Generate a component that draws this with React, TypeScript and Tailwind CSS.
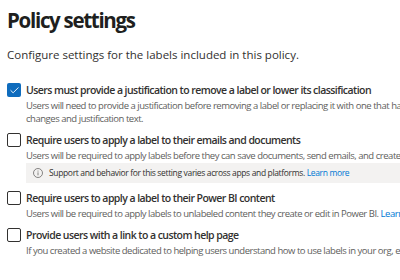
import { Check } from "lucide-react";

type Setting = {
  title: string;
  lines: string[];
  checked?: boolean;
  link?: boolean;
  note?: boolean;
};

const settings: Setting[] = [
  {
    title: "Users must provide a justification to remove a label or lower its classification",
    lines: [
      "Users will need to provide a justification before removing a label or replacing it with one that has a lower-order number. You can use activity explorer to review label",
      "changes and justification text.",
    ],
    checked: true,
  },
  {
    title: "Require users to apply a label to their emails and documents",
    lines: [
      "Users will be required to apply labels before they can save documents, send emails, and create or edit Power BI content.",
    ],
    note: true,
  },
  {
    title: "Require users to apply a label to their Power BI content",
    lines: ["Users will be required to apply labels to unlabeled content they create or edit in Power BI."],
    link: true,
  },
  {
    title: "Provide users with a link to a custom help page",
    lines: [
      "If you created a website dedicated to helping users understand how to use labels in your org, enter its URL here.",
    ],
  },
];

function Checkbox({ checked }: { checked?: boolean }) {
  if (checked) {
    return (
      <div className="mt-[1px] flex h-[14px] w-[14px] shrink-0 items-center justify-center rounded-[2px] bg-[#0f6cbd]">
        <Check className="h-[11px] w-[11px] text-white" strokeWidth={2} />
      </div>
    );
  }
  return <div className="mt-[1px] h-[14px] w-[14px] shrink-0 rounded-[2px] border border-[#323130] bg-white" />;
}

function InfoIcon() {
  return (
    <svg width="10" height="10" viewBox="0 0 12 12" fill="none" className="shrink-0">
      <circle cx="6" cy="6" r="5.4" stroke="#605e5c" strokeWidth="0.9" />
      <line x1="6" y1="5.2" x2="6" y2="8.8" stroke="#605e5c" strokeWidth="0.9" />
      <circle cx="6" cy="3.5" r="0.6" fill="#605e5c" />
    </svg>
  );
}

export default function App() {
  return (
    <div
      className="h-[280px] w-[400px] overflow-hidden bg-white pl-[7px] text-[#323130]"
      style={{ fontFamily: "'Open Sans', 'Noto Sans', sans-serif" }}
    >
      <h1 className="whitespace-nowrap pt-[4px] text-[20.5px] font-bold leading-[32px] tracking-[-1.3px] text-[#201f1e]">
        Policy settings
      </h1>
      <p className="mt-[11px] whitespace-nowrap text-[11.5px] leading-[16px] text-[#323130]">
        Configure settings for the labels included in this policy.
      </p>
      <div className="mt-[19px] flex flex-col gap-[7px]">
        {settings.map((s) => (
          <div key={s.title} className="flex gap-[5px]">
            <Checkbox checked={s.checked} />
            <div className="min-w-0 flex-1">
              <div className="whitespace-nowrap text-[10.5px] font-semibold leading-[16px] tracking-[-0.55px] text-[#323130]">
                {s.title}
              </div>
              <div className="mt-[1px] text-[9.5px] leading-[13px] tracking-[-0.47px] text-[#605e5c]">
                {s.lines.map((line, i) => (
                  <div key={i} className="whitespace-nowrap">
                    {s.link ? (
                      <>
                        {line} <span className="text-[#0078d4]">Learn more</span>
                      </>
                    ) : (
                      line
                    )}
                  </div>
                ))}
              </div>
              {s.note && (
                <div className="mt-[1px] flex h-[20px] items-center gap-[6px] whitespace-nowrap bg-[#f3f2f1] pl-[7px] text-[8.5px] tracking-[-0.35px] text-[#323130]">
                  <InfoIcon />
                  <span>
                    Support and behavior for this setting varies across apps and platforms.{" "}
                    <span className="text-[#0078d4]">Learn more</span>
                  </span>
                </div>
              )}
            </div>
          </div>
        ))}
      </div>
    </div>
  );
}
